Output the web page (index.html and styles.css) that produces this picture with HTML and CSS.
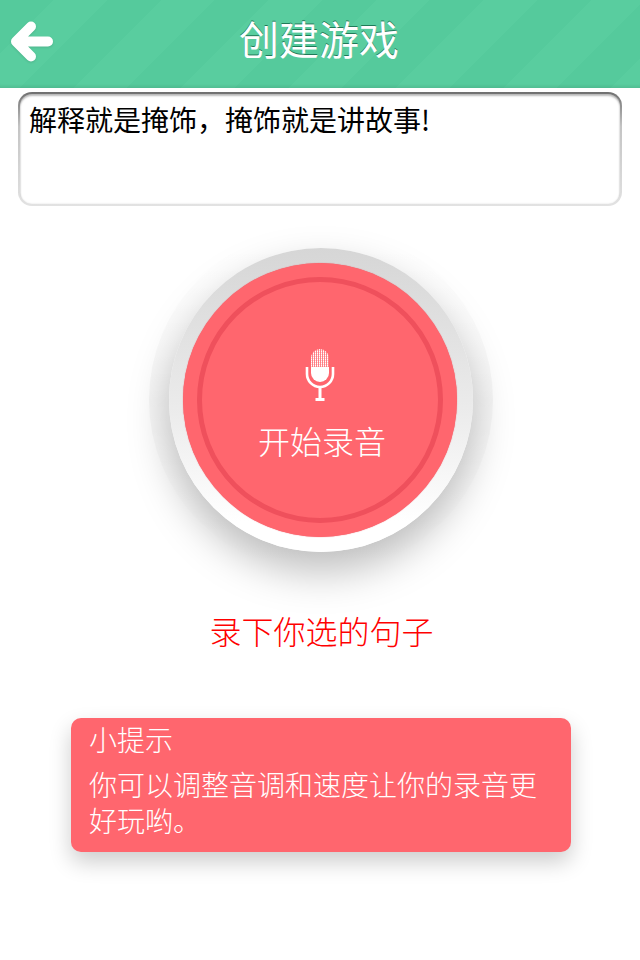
FILE: index.html
```html
<!DOCTYPE html>
<html lang="zh-CN">
<head>
<meta charset="utf-8">
<link rel="stylesheet" href="styles.css">
<title>创建游戏</title>
</head>
<body>
<div class="page">
	<div class="topbar">
		<svg class="back" width="46" height="46" viewBox="0 0 46 46">
			<path d="M8 23.5H40M23 8.5L8 23.5L23 38.5" fill="none" stroke="#fff" stroke-width="10" stroke-linecap="round" stroke-linejoin="round"/>
		</svg>
		<div class="title">创建游戏</div>
	</div>
	<div class="sentence">解释就是掩饰，掩饰就是讲故事!</div>
	<div class="recorder">
		<div class="halo">
			<div class="ring">
				<div class="disc">
					<div class="inner">
						<svg class="mic" width="30" height="54" viewBox="0 0 30 54">
							<defs>
								<pattern id="grille" width="2" height="2" patternUnits="userSpaceOnUse">
									<rect width="1.2" height="1.7" fill="#fff"/>
								</pattern>
								<clipPath id="capsule"><rect x="6" y="0" width="18" height="33" rx="9"/></clipPath>
							</defs>
							<g clip-path="url(#capsule)">
								<rect x="6" y="0" width="18" height="18" fill="url(#grille)"/>
								<rect x="6" y="18" width="18" height="15" fill="#fff"/>
							</g>
							<path d="M2 18V25A13 13 0 0 0 28 25V18" fill="none" stroke="#fff" stroke-width="2.6"/>
							<rect x="13.5" y="38" width="3" height="13" fill="#fff"/>
							<rect x="10.5" y="49" width="9" height="3" fill="#fff"/>
						</svg>
						<div class="start">开始录音</div>
					</div>
				</div>
			</div>
		</div>
	</div>
	<div class="caption">录下你选的句子</div>
	<div class="tip">
		<div class="tip-head">小提示</div>
		<div class="tip-body">你可以调整音调和速度让你的录音更好玩哟。</div>
	</div>
</div>
</body>
</html>
```

FILE: styles.css
```css
html, body {
	margin: 0;
	background-color: #fff;
}
.page {
	width: 640px;
	height: 960px;
	overflow: hidden;
	display: flex;
	flex-direction: column;
	font-family: "Noto Sans CJK SC", "Liberation Sans", sans-serif;
	font-weight: 300;
}
.topbar {
	height: 88px;
	flex: none;
	box-sizing: border-box;
	padding: 0 2px 12px 0;
	display: flex;
	align-items: center;
	justify-content: center;
	position: relative;
	background: repeating-linear-gradient(135deg, #55ca9c 0, #55ca9c 38px, #59cd9f 38px, #59cd9f 76px);
	box-shadow: inset 0 -4px 3px -2px rgba(0, 0, 0, .08);
}
.back {
	position: absolute;
	left: 8px;
	top: 18px;
	filter: drop-shadow(0 1px 1px rgba(0, 0, 0, .12));
}
.title {
	font-size: 40px;
	font-weight: 400;
	line-height: 48px;
	color: #fff;
	text-shadow: 0 -1px 0 #1f7a58;
}
.sentence {
	flex: none;
	box-sizing: border-box;
	height: 114px;
	margin: 4px 18px 0;
	padding: 5px 9px;
	font-size: 28px;
	font-weight: 400;
	line-height: 40px;
	color: #000;
	border: 2px solid transparent;
	border-radius: 14px;
	background: linear-gradient(#fff, #fff) padding-box, linear-gradient(#6f6f6f, #c4c4c4 30%, #e2e2e2) border-box;
	box-shadow: inset 0 2px 2px rgba(0, 0, 0, .25), inset 0 0 2px rgba(0, 0, 0, .15);
}
.recorder {
	flex: none;
	display: flex;
	justify-content: center;
	margin-top: 22px;
	padding-left: 2px;
}
.halo {
	width: 344px;
	height: 344px;
	border-radius: 50%;
	display: flex;
	align-items: center;
	justify-content: center;
	background: linear-gradient(180deg, rgba(0, 0, 0, 0) 5%, rgba(0, 0, 0, .035) 50%, rgba(0, 0, 0, .01) 75%, rgba(0, 0, 0, 0) 100%);
}
.ring {
	width: 304px;
	height: 304px;
	border-radius: 50%;
	display: flex;
	align-items: center;
	justify-content: center;
	background: linear-gradient(180deg, #d6d6d6 0, #ececec 55%, #fff 90%);
	box-shadow: 0 20px 42px rgba(0, 0, 0, .26);
}
.disc {
	width: 274px;
	height: 274px;
	margin-left: -2px;
	border-radius: 50%;
	display: flex;
	align-items: center;
	justify-content: center;
	background-color: #ff666e;
	box-shadow: 0 0 1px #e8505c;
}
.inner {
	box-sizing: border-box;
	width: 246px;
	height: 246px;
	border-radius: 50%;
	border: 5px solid #ef505c;
	display: flex;
	flex-direction: column;
	align-items: center;
	padding-top: 67px;
}
.mic {
	flex: none;
}
.start {
	margin-top: 15px;
	padding-left: 4px;
	font-size: 32px;
	line-height: 44px;
	color: #fff;
}
.caption {
	flex: none;
	margin-top: 36px;
	padding-left: 3px;
	text-align: center;
	font-size: 32px;
	line-height: 44px;
	color: #f00;
}
.tip {
	flex: none;
	box-sizing: border-box;
	width: 500px;
	height: 134px;
	margin: 66px 0 0 71px;
	padding: 3px 18px;
	font-size: 28px;
	line-height: 36px;
	color: #fff;
	background-color: #ff666e;
	border-radius: 10px;
	box-shadow: 0 10px 22px rgba(0, 0, 0, .2);
}
.tip-head {
	margin-bottom: 9px;
}
```
